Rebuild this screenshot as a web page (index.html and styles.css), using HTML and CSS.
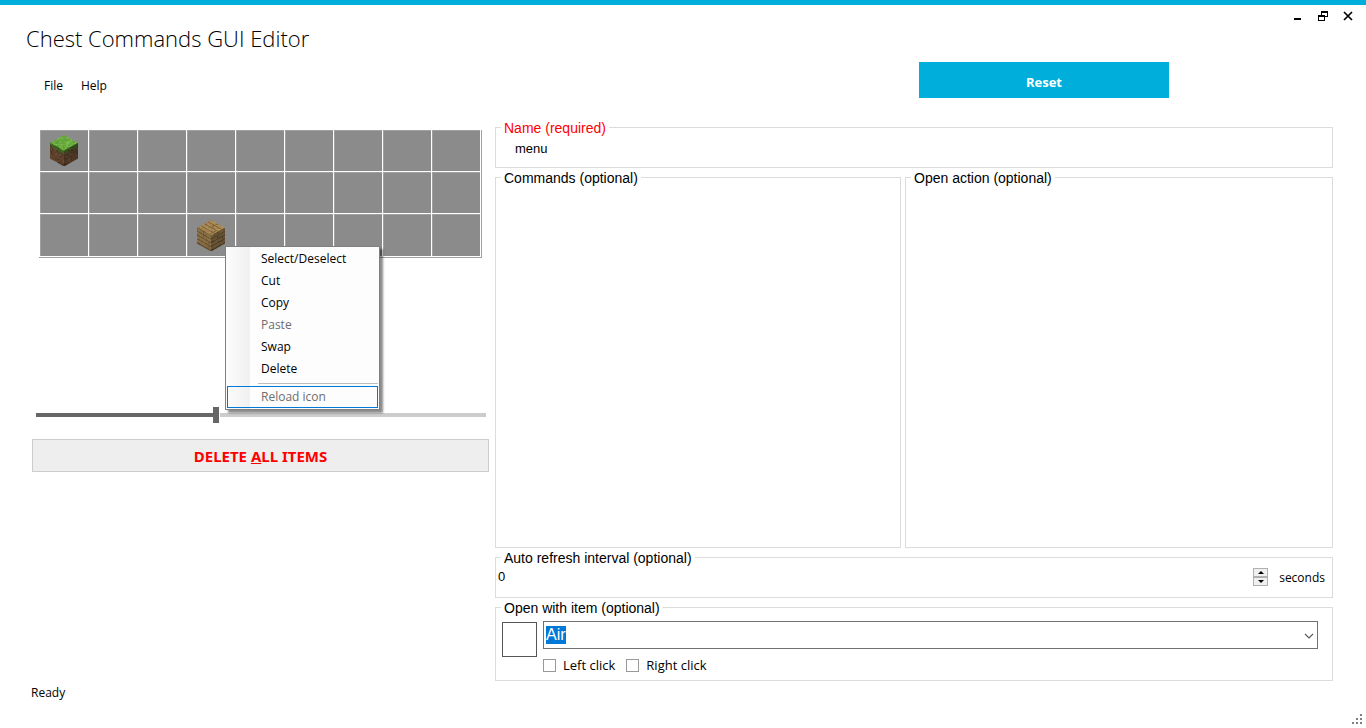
FILE: index.html
```html
<!DOCTYPE html>
<html lang="en">
<head>
<meta charset="utf-8">
<title>Chest Commands GUI Editor</title>
<link rel="stylesheet" href="styles.css">
</head>
<body>
<header class="titlebar">
  <h1 class="title">Chest Commands GUI Editor</h1>
  <div class="window-controls">
    <button class="window-button" type="button" aria-label="Minimize"><svg width="10" height="10"><path d="M1 7h7v2H1z"/></svg></button>
    <button class="window-button" type="button" aria-label="Restore"><svg width="10" height="10" shape-rendering="crispEdges"><path d="M3 0h7v6H7V5h2V2H4v2H3zM0 4h7v6H0zM1 6v3h5V6z" fill-rule="evenodd"/></svg></button>
    <button class="window-button" type="button" aria-label="Close"><svg width="10" height="10"><path d="M1 1l8 8M9 1l-8 8" stroke="#000" stroke-width="1.7"/></svg></button>
  </div>
</header>
<div class="toolbar">
  <nav class="menubar">
    <button class="menubar-item" type="button">File</button>
    <button class="menubar-item" type="button">Help</button>
  </nav>
  <button class="reset" type="button">Reset</button>
</div>
<main class="editor">
  <section class="left">
    <div class="chest">
      <div class="slots" id="slots"></div>
      <div class="context-menu" role="menu">
        <button class="context-item" role="menuitem" type="button">Select/Deselect</button>
        <button class="context-item" role="menuitem" type="button">Cut</button>
        <button class="context-item" role="menuitem" type="button">Copy</button>
        <button class="context-item" role="menuitem" type="button" disabled>Paste</button>
        <button class="context-item" role="menuitem" type="button">Swap</button>
        <button class="context-item" role="menuitem" type="button">Delete</button>
        <div class="context-separator" role="separator"></div>
        <button class="context-item context-item-hot" role="menuitem" type="button" disabled>Reload icon</button>
      </div>
    </div>
    <input class="zoom" type="range" min="0" max="1000" value="398" aria-label="Zoom">
    <button class="delete-all" type="button">DELETE <u>A</u>LL ITEMS</button>
  </section>
  <form class="settings">
    <fieldset class="group">
      <legend class="required">Name (required)</legend>
      <input class="name-input" type="text" value="menu" aria-label="Name">
    </fieldset>
    <div class="actions">
      <fieldset class="group">
        <legend>Commands (optional)</legend>
        <textarea class="area" aria-label="Commands"></textarea>
      </fieldset>
      <fieldset class="group">
        <legend>Open action (optional)</legend>
        <textarea class="area" aria-label="Open action"></textarea>
      </fieldset>
    </div>
    <fieldset class="group">
      <legend>Auto refresh interval (optional)</legend>
      <div class="interval">
        <input class="interval-input" id="interval" type="text" inputmode="numeric" value="0" aria-label="Interval">
        <div class="spinner">
          <button class="spin" type="button" aria-label="Increase"><svg width="6" height="3"><path d="M3 0L6 3H0z"/></svg></button>
          <button class="spin" type="button" aria-label="Decrease"><svg width="6" height="3"><path d="M0 0h6L3 3z"/></svg></button>
        </div>
        <label class="seconds" for="interval">seconds</label>
      </div>
    </fieldset>
    <fieldset class="group">
      <legend>Open with item (optional)</legend>
      <div class="open-item">
        <div class="preview"></div>
        <div class="item-fields">
          <div class="combo">
            <input class="combo-input" id="item" type="text" role="combobox" aria-expanded="false" value="Air" aria-label="Item">
            <button class="combo-button" type="button" aria-label="Show items"><svg width="10" height="6"><path d="M1 1l4 4 4-4" fill="none" stroke="#555" stroke-width="1.1"/></svg></button>
          </div>
          <div class="clicks">
            <label class="check"><input class="check-box" type="checkbox">Left click</label>
            <label class="check"><input class="check-box" type="checkbox">Right click</label>
          </div>
        </div>
      </div>
    </fieldset>
  </form>
</main>
<footer class="statusbar">
  <span class="status">Ready</span>
  <svg class="grip" width="10" height="10" shape-rendering="crispEdges" fill="#808080"><path d="M8 0h2v2H8zM4 4h2v2H4zM8 4h2v2H8zM0 8h2v2H0zM4 8h2v2H4zM8 8h2v2H8z"/></svg>
</footer>
<script src="app.js"></script>
</body>
</html>
```
FILE: styles.css
```css
* { box-sizing: border-box; }

body {
  margin: 0;
  min-height: 100vh;
  display: flex;
  flex-direction: column;
  border-top: 5px solid #00aedb;
  background: #fff;
  color: #000;
  font-family: "Open Sans", "Noto Sans", sans-serif;
  font-size: 12px;
}

button, input, textarea { font: inherit; color: inherit; }
button { border: 0; padding: 0; background: none; }

.titlebar {
  display: flex;
  justify-content: space-between;
  align-items: flex-start;
  height: 57px;
  padding: 0 8px 0 26px;
}
.title {
  margin: 17px 0 0;
  font-size: 22px;
  line-height: 32px;
  font-weight: 300;
}
.window-controls { display: flex; gap: 5px; padding-top: 1px; }
.window-button {
  width: 20px;
  height: 20px;
  display: grid;
  place-items: center;
}

.toolbar {
  display: flex;
  justify-content: space-between;
  height: 56px;
  padding: 0 197px 0 44px;
}
.menubar { display: flex; gap: 18px; height: 46px; }
.menubar-item { font-size: 12px; }
.reset {
  width: 250px;
  height: 36px;
  padding-top: 4px;
  background: #00aedb;
  color: #fff;
  font-size: 13px;
  font-weight: 700;
}

.editor {
  flex: 1;
  display: grid;
  grid-template-columns: 457px 1fr;
  gap: 6px;
  padding: 0 33px 0 32px;
}
.left { display: flex; flex-direction: column; }

.chest { position: relative; height: 289px; padding: 12px 7px; }
.slots {
  display: grid;
  grid-template-columns: repeat(9, 1fr);
  grid-template-rows: 42px 42px 43px;
  padding-left: 1px;
  border-right: 1px solid #a0a0a0;
  border-bottom: 1px solid #a0a0a0;
}
.slot {
  display: grid;
  place-items: center;
  border: 1px solid #fff;
  border-width: 0 1px 1px 0;
  background: #8b8b8b;
  box-shadow: inset 1px 1px #a0a0a0;
}

.context-menu {
  position: absolute;
  left: 193px;
  top: 128px;
  width: 155px;
  padding: 1px;
  border: 1px solid #808080;
  background: linear-gradient(to right, #fcfcfc, #f0f0f0 24px, #fdfdfd 24px);
  box-shadow: 3px 3px 2px rgba(0, 0, 0, .45);
}
.context-item {
  display: block;
  width: 100%;
  height: 22px;
  padding: 0 0 2px 34px;
  text-align: left;
}
.context-item:disabled { color: #6d6d6d; }
.context-item-hot { padding-left: 33px; border: 1px solid #0078d7; }
.context-separator {
  height: 6px;
  margin-left: 31px;
  background: linear-gradient(#bdbdbd, #bdbdbd) 0 3px / 100% 1px no-repeat;
}

.zoom {
  appearance: none;
  width: 450px;
  height: 16px;
  margin: 0 0 16px 4px;
  background: linear-gradient(to right, #666 40%, #fff 40%, #fff 184px, #ccc 184px) 0 6px / 100% 4px no-repeat;
}
.zoom::-webkit-slider-thumb {
  appearance: none;
  width: 6px;
  height: 16px;
  background: #666;
}
.delete-all {
  height: 33px;
  border: 1px solid #ccc;
  background: #eee;
  color: #f00;
  font-family: "Noto Sans", sans-serif;
  font-size: 15px;
  font-weight: 700;
}

.settings {
  display: grid;
  grid-template-rows: 50px 1fr 50px 83px;
}
.group {
  min-width: 0;
  margin: 0;
  padding: 0;
  border: 1px solid #dcdcdc;
}
.group legend {
  height: 18px;
  margin-left: 5px;
  padding: 0 3px;
  font: 14px/20px "Liberation Sans", Arial, sans-serif;
}
.group .required { color: #f00; }
.name-input {
  width: 100%;
  height: 24px;
  padding: 0 19px;
  border: 0;
  background: none;
  font-family: "Liberation Sans", Arial, sans-serif;
  font-size: 13px;
}
.actions {
  display: grid;
  grid-template-columns: 406px 1fr;
  gap: 4px;
}
.area {
  display: block;
  width: 100%;
  height: 100%;
  border: 0;
  resize: none;
  background: none;
}
.interval { display: flex; align-items: flex-start; padding: 0 7px 0 2px; }
.interval-input {
  flex: 1;
  height: 20px;
  padding: 0;
  border: 0;
  background: none;
  font-family: "Liberation Sans", Arial, sans-serif;
  font-size: 13px;
}
.spinner { width: 15px; margin: 2px 11px 0 0; }
.spin {
  display: grid;
  place-items: center;
  width: 100%;
  height: 9px;
  border: 1px solid #b0b0b0;
  background: #f0f0f0;
}
.seconds { font-size: 12px; line-height: 24px; }

.open-item { display: flex; gap: 6px; padding: 4px 14px 0 6px; }
.preview { width: 35px; height: 35px; margin-top: 2px; border: 1px solid #555; }
.item-fields { flex: 1; padding-top: 1px; }
.combo {
  display: flex;
  align-items: center;
  height: 28px;
  padding: 0 3px 0 2px;
  border: 1px solid #707070;
}
.combo-input {
  flex: 1;
  min-width: 0;
  height: 22px;
  padding: 0;
  border: 0;
  outline: 0;
  font: 16px/20px "Liberation Sans", Arial, sans-serif;
}
.combo-input::selection { background: #0078d7; color: #fff; }
.combo-button { display: grid; padding-top: 2px; }
.clicks { display: flex; gap: 11px; padding-top: 6px; }
.check {
  display: flex;
  align-items: center;
  gap: 7px;
  font-size: 13px;
  line-height: 20px;
}
.check-box {
  appearance: none;
  width: 13px;
  height: 13px;
  margin: 0;
  border: 1px solid #999;
  background: #fff;
}

.statusbar {
  display: flex;
  justify-content: space-between;
  align-items: flex-end;
  height: 47px;
  padding: 3px 4px 4px 31px;
}
.status { align-self: flex-start; line-height: 18px; }
```
FILE: app.js
```js
const slots = document.getElementById("slots");

// Small deterministic generator so that textures are stable between loads.
function noise(seed) {
  let s = seed;
  return () => (s = (s * 16807) % 2147483647) / 2147483647;
}

function rgb(color, k) {
  return "rgb(" + color.map(c => Math.round(c * k)).join(",") + ")";
}

const grass = [112, 180, 66];
const textures = {
  grass(face, x, y, r) {
    if (face === "top") return rgb(grass, 0.82 + r * 0.3);
    const shade = face === "left" ? 0.9 : 0.72;
    if (y < 2 + ((x * 7) % 5) / 2) return rgb([72, 122, 38], shade * (0.75 + r * 0.3));
    return rgb([118, 82, 54], shade * (0.62 + r * 0.45));
  },
  planks(face, x, y, r) {
    const shade = { top: 1, left: 0.8, right: 0.6 }[face];
    const seam = y % 4 === 3 || (x === (y < 8 ? 7 : 13) && y % 4 < 2);
    return rgb(seam ? [128, 100, 58] : [184, 148, 90], shade * (0.82 + r * 0.22));
  }
};

const faces = {
  top: "matrix(.875 .5 -.875 .5 14 0)",
  left: "matrix(.875 .5 0 .95 0 7.8)",
  right: "matrix(.875 -.5 0 .95 14 15.8)"
};

function block(kind) {
  const next = noise(kind.length * 991);
  let out = '<svg width="28" height="31">';
  for (const [face, matrix] of Object.entries(faces)) {
    out += `<g transform="${matrix}">`;
    for (let y = 0; y < 16; y++)
      for (let x = 0; x < 16; x++)
        out += `<rect x="${x}" y="${y}" width="1.4" height="1.4" fill="${textures[kind](face, x, y, next())}"/>`;
    out += "</g>";
  }
  return out + "</svg>";
}

const items = { 0: "grass", 21: "planks" };
for (let i = 0; i < 27; i++) {
  const slot = document.createElement("button");
  slot.type = "button";
  slot.className = "slot";
  slot.setAttribute("aria-label", items[i] || "Empty slot");
  if (items[i]) slot.innerHTML = block(items[i]);
  slots.append(slot);
}

const item = document.getElementById("item");
item.focus();
item.select();
```
